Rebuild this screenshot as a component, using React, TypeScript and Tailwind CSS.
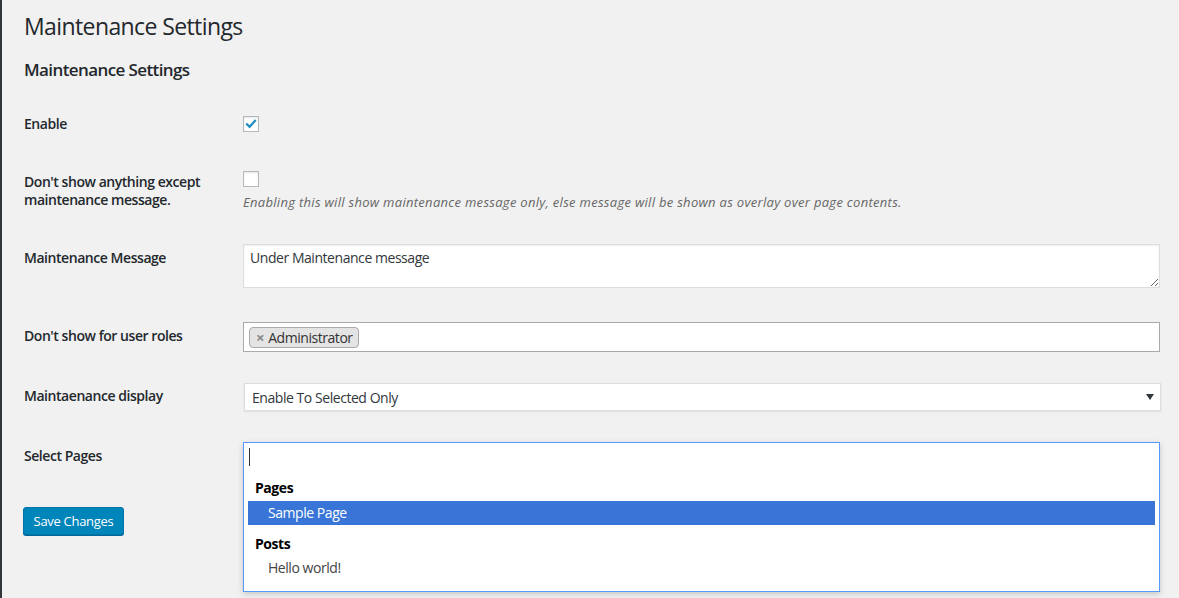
import React from 'react';

const font = { fontFamily: '"Open Sans", "Noto Sans", sans-serif' };

const Checkbox: React.FC<{ checked?: boolean }> = ({ checked }) => (
  <div className="w-4 h-4 bg-white border border-[#b4b9be] shadow-[inset_0_1px_2px_rgba(0,0,0,0.1)] flex items-center justify-center">
    {checked && (
      <svg width="14" height="14" viewBox="0 0 14 14" fill="none">
        <path d="M3 7.2 L5.6 9.8 L11 3.8" stroke="#1e8cbe" strokeWidth="2.2" strokeLinecap="square" />
      </svg>
    )}
  </div>
);

const Label: React.FC<{ children: React.ReactNode; mt: string }> = ({ children, mt }) => (
  <div className={`w-[219px] shrink-0 text-[14px] leading-[18px] font-semibold text-[#23282d] ${mt}`}>{children}</div>
);

export default function App() {
  return (
    <div className="min-h-screen w-full bg-[#f1f1f1] border-l-2 border-[#32373c] text-[#23282d] tracking-[-0.45px]" style={font}>
      <div className="pl-[22px] pr-[19px] pt-[11px]">
        <h1 className="text-[23px] leading-[30px] font-normal tracking-[-0.6px]">Maintenance Settings</h1>
        <h2 className="mt-[17px] text-[17px] leading-[24px] font-semibold tracking-[-0.6px]">Maintenance Settings</h2>

        {/* Enable */}
        <div className="mt-[33px] h-[56px] flex">
          <Label mt="mt-0">Enable</Label>
          <div className="mt-[1px]">
            <Checkbox checked />
          </div>
        </div>

        {/* Don't show anything */}
        <div className="h-[73px] flex">
          <Label mt="mt-[2px]">
            Don't show anything except
            <br />
            maintenance message.
          </Label>
          <div>
            <Checkbox />
            <p className="mt-[6px] text-[13px] leading-[18px] italic text-[#666] tracking-[0.3px]">
              Enabling this will show maintenance message only, else message will be shown as overlay over page contents.
            </p>
          </div>
        </div>

        {/* Message */}
        <div className="h-[78px] flex">
          <Label mt="mt-[5px]">Maintenance Message</Label>
          <textarea
            readOnly
            defaultValue="Under Maintenance message"
            className="flex-1 h-[44px] bg-white border border-[#ddd] shadow-[inset_0_1px_2px_rgba(0,0,0,0.07)] px-[6px] py-[3px] text-[14px] leading-[20px] text-[#32373c] outline-none tracking-[-0.45px]"
            style={font}
          />
        </div>

        {/* User roles */}
        <div className="h-[61px] flex">
          <Label mt="mt-[5px]">Don't show for user roles</Label>
          <div className="flex-1 h-[30px] bg-white border border-[#aaa] flex items-center px-[5px]">
            <span className="flex items-center h-[21px] bg-[#e4e4e4] border border-[#aaa] rounded-[4px] pl-[6px] pr-[5px] text-[14px] text-[#333]">
              <span className="text-[#888] font-bold text-[15px] mr-[4px] leading-none">×</span>
              Administrator
            </span>
          </div>
        </div>

        {/* Display */}
        <div className="h-[59px] flex">
          <Label mt="mt-[4px]">Maintaenance display</Label>
          <div className="flex-1 ml-[1px] -mr-[1px] h-[28px] bg-white border border-[#ddd] shadow-[0_1px_2px_rgba(0,0,0,0.07)] flex items-center justify-between pl-[7px] pr-[6px]">
            <span className="text-[14px] text-[#32373c]">Enable To Selected Only</span>
            <svg width="8" height="6" viewBox="0 0 8 6">
              <path d="M0 0 H8 L4 6 Z" fill="#32373c" />
            </svg>
          </div>
        </div>

        {/* Select pages */}
        <div className="h-[65px] flex">
          <Label mt="mt-[5px]">Select Pages</Label>
          <div className="flex-1 relative">
            <div className="absolute left-0 right-0 top-0 h-[150px] bg-white border border-[#5897fb] shadow-[0_2px_6px_rgba(0,0,0,0.18)] z-10">
              <div className="h-[28px] px-[5px] flex items-center">
                <span className="w-px h-[18px] bg-[#333]" />
              </div>
              <div className="px-[4px] text-[14px]">
                <div className="h-[30px] pt-[8px] pl-[7px] font-bold text-black leading-[18px]">Pages</div>
                <div className="h-[24px] bg-[#3875d7] text-white pl-[20px] flex items-center pb-[2px]">Sample Page</div>
                <div className="h-[30px] pt-[10px] pl-[7px] font-bold text-black leading-[18px]">Posts</div>
                <div className="h-[24px] pl-[20px] flex items-center pt-[1px] text-[#444]">Hello world!</div>
              </div>
            </div>
          </div>
        </div>

        <button
          className="ml-[-1px] w-[101px] h-[28px] bg-[#0085ba] border border-[#0073aa] rounded-[3px] shadow-[0_1px_0_#006799] text-white text-[13px] leading-none tracking-[-0.3px]"
          style={font}
        >
          Save Changes
        </button>
      </div>
    </div>
  );
}
